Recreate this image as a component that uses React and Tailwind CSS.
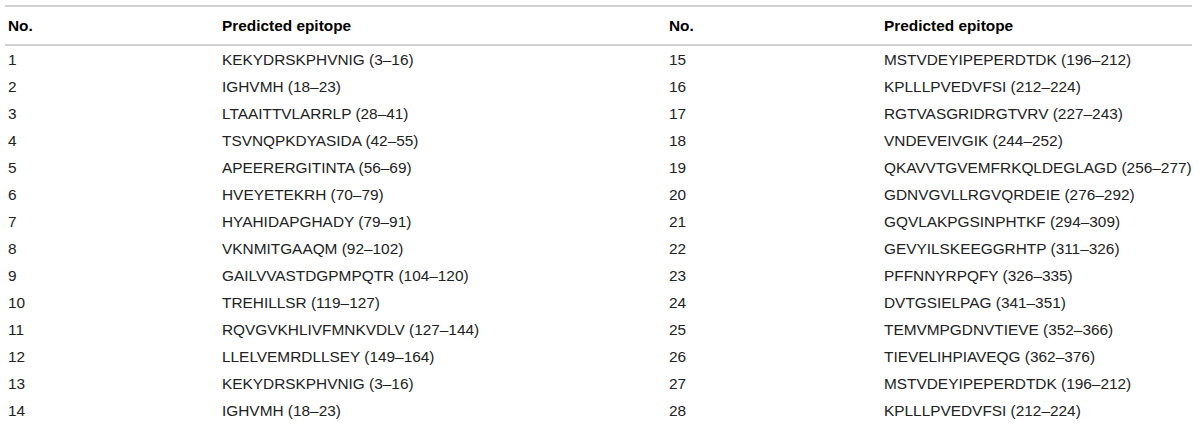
import React from "react";

const rows = [
  ["1", "KEKYDRSKPHVNIG (3–16)", "15", "MSTVDEYIPEPERDTDK (196–212)"],
  ["2", "IGHVMH (18–23)", "16", "KPLLLPVEDVFSI (212–224)"],
  ["3", "LTAAITTVLARRLP (28–41)", "17", "RGTVASGRIDRGTVRV (227–243)"],
  ["4", "TSVNQPKDYASIDA (42–55)", "18", "VNDEVEIVGIK (244–252)"],
  ["5", "APEERERGITINTA (56–69)", "19", "QKAVVTGVEMFRKQLDEGLAGD (256–277)"],
  ["6", "HVEYETEKRH (70–79)", "20", "GDNVGVLLRGVQRDEIE (276–292)"],
  ["7", "HYAHIDAPGHADY (79–91)", "21", "GQVLAKPGSINPHTKF (294–309)"],
  ["8", "VKNMITGAAQM (92–102)", "22", "GEVYILSKEEGGRHTP (311–326)"],
  ["9", "GAILVVASTDGPMPQTR (104–120)", "23", "PFFNNYRPQFY (326–335)"],
  ["10", "TREHILLSR (119–127)", "24", "DVTGSIELPAG (341–351)"],
  ["11", "RQVGVKHLIVFMNKVDLV (127–144)", "25", "TEMVMPGDNVTIEVE (352–366)"],
  ["12", "LLELVEMRDLLSEY (149–164)", "26", "TIEVELIHPIAVEQG (362–376)"],
  ["13", "KEKYDRSKPHVNIG (3–16)", "27", "MSTVDEYIPEPERDTDK (196–212)"],
  ["14", "IGHVMH (18–23)", "28", "KPLLLPVEDVFSI (212–224)"],
];

const cols = "grid grid-cols-[214px_447px_215px_311px]";

const App = () => {
  return (
    <div className="w-[1200px] h-[428px] bg-white pt-[5px] pl-[5px] overflow-hidden font-['Liberation_Sans',Arial,sans-serif] text-[15.4px] text-[#222]">
      <div className="w-[1187px]">
        <div className={`${cols} h-[41px] items-center border-t-2 border-b-2 border-[#d2d2d2] font-bold text-black`}>
          <div className="pl-[3px]">No.</div>
          <div className="pl-[3px]">Predicted epitope</div>
          <div className="pl-[3px]">No.</div>
          <div className="pl-[3px]">Predicted epitope</div>
        </div>

        {rows.map((r, i) => (
          <div key={i} className={`${cols} h-[27px] items-center`}>
            {r.map((cell, j) => (
              <div key={j} className="pl-[3px] whitespace-nowrap">
                {cell}
              </div>
            ))}
          </div>
        ))}
      </div>
    </div>
  );
};

export default App;
